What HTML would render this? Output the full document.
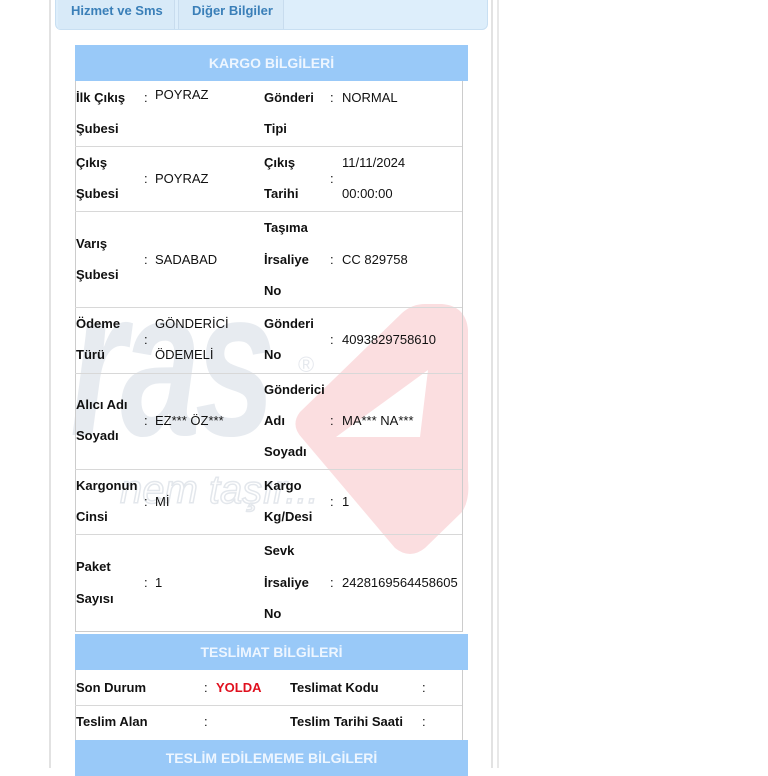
<!DOCTYPE html>
<html><head><meta charset="utf-8"><style>
*{margin:0;padding:0;box-sizing:border-box}
body{width:768px;height:768px;background:#fff;position:relative;overflow:hidden;font-family:"Liberation Sans",Arial,sans-serif;font-size:13px;color:#111}
.a{position:absolute;white-space:nowrap;line-height:16px}
.b{font-weight:bold}
.hl{position:absolute;left:75px;width:387px;height:1px;background:#d8d8d8}
.hdr{position:absolute;left:75px;width:393px;height:36px;background:#99c9f8;color:#eef6ff;font-weight:bold;font-size:14px;text-align:center;line-height:36px}
</style></head><body>
<div style="position:absolute;left:49px;top:0;width:2px;height:768px;background:#e2e2e2"></div>
<div style="position:absolute;left:491px;top:0;width:2px;height:768px;background:#e2e2e2"></div>
<div style="position:absolute;left:497px;top:0;width:2px;height:768px;background:#e8e8e8"></div>
<div style="position:absolute;left:55px;top:-6px;width:433px;height:36px;background:#ddeefb;border:1px solid #c8dff2;border-radius:6px"></div>
<div style="position:absolute;left:58px;top:0;width:117px;height:29px;background:#d8eaf8;border-right:1px solid #c8dcee"></div>
<div style="position:absolute;left:178px;top:0;width:106px;height:29px;background:#d8eaf8;border-left:1px solid #c8dcee;border-right:1px solid #c8dcee"></div>
<div class="a b" style="left:71px;top:3px;color:#3a7fb8">Hizmet ve Sms</div>
<div class="a b" style="left:192px;top:3px;color:#3a7fb8">Diğer Bilgiler</div>

<svg style="position:absolute;left:0;top:0" width="768" height="768">
<path d="M300 412 Q290 425 302 438 L395 548 Q410 560 425 548 L462 512 Q470 500 468 480 L468 330 Q466 306 442 304 L425 304 Q412 304 402 313 Z" fill="#f7c3c6" opacity="0.55"/>
<path d="M336 437 L428 370 L420 437 Z" fill="#fff"/>
<g transform="translate(0,435) scale(1,1.45)">
<text x="70" y="0" font-family="Liberation Sans" font-weight="bold" font-style="italic" font-size="145" fill="#ccd4df" opacity="0.45" letter-spacing="-6">ras</text>
</g>
<text x="298" y="372" font-family="Liberation Sans" font-size="22" fill="#d6dbe3" opacity="0.6">®</text>
<text x="120" y="503" font-family="Liberation Sans" font-style="italic" font-size="40" fill="none" stroke="#d8dde4" stroke-width="1.5" opacity="0.7">nem taşır...</text>
</svg>

<div style="position:absolute;left:75px;top:81px;width:388px;height:551px;border-left:1px solid #ccc;border-right:1px solid #ccc;border-bottom:1px solid #ccc"></div>
<div class="hdr" style="top:45px">KARGO BİLGİLERİ</div>
<div class="hl" style="top:146px"></div><div class="hl" style="top:211px"></div><div class="hl" style="top:307px"></div>
<div class="hl" style="top:373px"></div><div class="hl" style="top:469px"></div><div class="hl" style="top:534px"></div>

<div class="a b" style="left:76px;top:90px">İlk Çıkış</div><div class="a b" style="left:76px;top:121px">Şubesi</div>
<div class="a" style="left:144px;top:90px">:</div><div class="a" style="left:155px;top:87px">POYRAZ</div>
<div class="a b" style="left:264px;top:90px">Gönderi</div><div class="a b" style="left:264px;top:121px">Tipi</div>
<div class="a" style="left:330px;top:90px">:</div><div class="a" style="left:342px;top:90px">NORMAL</div>

<div class="a b" style="left:76px;top:155px">Çıkış</div><div class="a b" style="left:76px;top:186px">Şubesi</div>
<div class="a" style="left:144px;top:171px">:</div><div class="a" style="left:155px;top:171px">POYRAZ</div>
<div class="a b" style="left:264px;top:155px">Çıkış</div><div class="a b" style="left:264px;top:186px">Tarihi</div>
<div class="a" style="left:330px;top:171px">:</div><div class="a" style="left:342px;top:155px">11/11/2024</div><div class="a" style="left:342px;top:186px">00:00:00</div>

<div class="a b" style="left:76px;top:236px">Varış</div><div class="a b" style="left:76px;top:267px">Şubesi</div>
<div class="a" style="left:144px;top:252px">:</div><div class="a" style="left:155px;top:252px">SADABAD</div>
<div class="a b" style="left:264px;top:220px">Taşıma</div><div class="a b" style="left:264px;top:252px">İrsaliye</div><div class="a b" style="left:264px;top:283px">No</div>
<div class="a" style="left:330px;top:252px">:</div><div class="a" style="left:342px;top:252px">CC 829758</div>

<div class="a b" style="left:76px;top:316px">Ödeme</div><div class="a b" style="left:76px;top:347px">Türü</div>
<div class="a" style="left:144px;top:332px">:</div><div class="a" style="left:155px;top:316px">GÖNDERİCİ</div><div class="a" style="left:155px;top:347px">ÖDEMELİ</div>
<div class="a b" style="left:264px;top:316px">Gönderi</div><div class="a b" style="left:264px;top:347px">No</div>
<div class="a" style="left:330px;top:332px">:</div><div class="a" style="left:342px;top:332px">4093829758610</div>

<div class="a b" style="left:76px;top:397px">Alıcı Adı</div><div class="a b" style="left:76px;top:428px">Soyadı</div>
<div class="a" style="left:144px;top:413px">:</div><div class="a" style="left:155px;top:413px">EZ*** ÖZ***</div>
<div class="a b" style="left:264px;top:382px">Gönderici</div><div class="a b" style="left:264px;top:413px">Adı</div><div class="a b" style="left:264px;top:444px">Soyadı</div>
<div class="a" style="left:330px;top:413px">:</div><div class="a" style="left:342px;top:413px">MA*** NA***</div>

<div class="a b" style="left:76px;top:478px">Kargonun</div><div class="a b" style="left:76px;top:509px">Cinsi</div>
<div class="a" style="left:144px;top:494px">:</div><div class="a" style="left:155px;top:494px">Mİ</div>
<div class="a b" style="left:264px;top:478px">Kargo</div><div class="a b" style="left:264px;top:509px">Kg/Desi</div>
<div class="a" style="left:330px;top:494px">:</div><div class="a" style="left:342px;top:494px">1</div>

<div class="a b" style="left:76px;top:559px">Paket</div><div class="a b" style="left:76px;top:591px">Sayısı</div>
<div class="a" style="left:144px;top:575px">:</div><div class="a" style="left:155px;top:575px">1</div>
<div class="a b" style="left:264px;top:543px">Sevk</div><div class="a b" style="left:264px;top:575px">İrsaliye</div><div class="a b" style="left:264px;top:606px">No</div>
<div class="a" style="left:330px;top:575px">:</div><div class="a" style="left:342px;top:575px">2428169564458605</div>

<div class="hdr" style="top:634px">TESLİMAT BİLGİLERİ</div>
<div style="position:absolute;left:75px;top:670px;width:388px;height:70px;border-left:1px solid #ccc;border-right:1px solid #ccc"></div>
<div class="hl" style="top:705px"></div>
<div class="a b" style="left:76px;top:680px">Son Durum</div>
<div class="a" style="left:204px;top:680px">:</div><div class="a b" style="left:216px;top:680px;color:#e0101e">YOLDA</div>
<div class="a b" style="left:290px;top:680px">Teslimat Kodu</div><div class="a" style="left:422px;top:680px">:</div>
<div class="a b" style="left:76px;top:714px">Teslim Alan</div>
<div class="a" style="left:204px;top:714px">:</div>
<div class="a b" style="left:290px;top:714px">Teslim Tarihi Saati</div><div class="a" style="left:422px;top:714px">:</div>
<div class="hdr" style="top:740px">TESLİM EDİLEMEME BİLGİLERİ</div>
</body></html>
